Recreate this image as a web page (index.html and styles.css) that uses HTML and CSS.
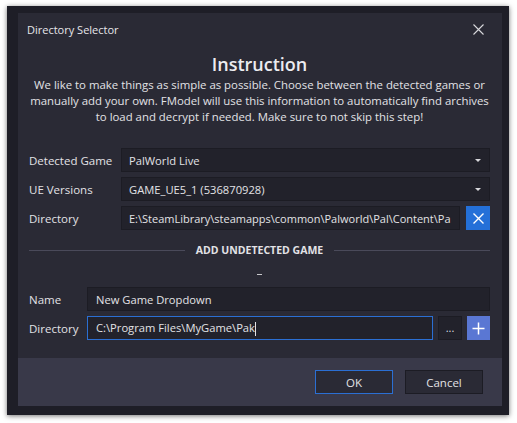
FILE: index.html
```html
<!DOCTYPE html>
<html>
<head>
<meta charset="utf-8">
<link rel="stylesheet" href="styles.css">
</head>
<body>
<div class="window">
  <div class="panel">
    <div class="titlebar">
      <span class="title">Directory Selector</span>
      <svg class="close" width="11" height="11" viewBox="0 0 11 11"><path d="M0.5 0.5L10.5 10.5M10.5 0.5L0.5 10.5" stroke="#d8d8dc" stroke-width="1.1"/></svg>
    </div>
    <div class="content">
      <h1 class="heading">Instruction</h1>
      <p class="intro">We like to make things as simple as possible. Choose between the detected games or<br>manually add your own. FModel will use this information to automatically find archives<br>to load and decrypt if needed. Make sure to not skip this step!</p>
      <div class="form">
        <div class="label">Detected Game</div>
        <div class="field select"><span class="val">PalWorld Live</span><span class="arrow"></span></div>
        <div class="label">UE Versions</div>
        <div class="field select"><span class="val">GAME_UE5_1 (536870928)</span><span class="arrow"></span></div>
        <div class="label">Directory</div>
        <div class="fieldrow">
          <div class="field"><span class="val path">E:\SteamLibrary\steamapps\common\Palworld\Pal\Content\Pa</span></div>
          <div class="btn btn-blue">
            <svg width="11" height="11" viewBox="0 0 11 11"><path d="M0.5 0.5L10.5 10.5M10.5 0.5L0.5 10.5" stroke="#ffffff" stroke-width="1.4"/></svg>
          </div>
        </div>
      </div>
      <div class="separator"><span class="line"></span><span class="septext">ADD UNDETECTED GAME</span><span class="line"></span></div>
      <div class="dash"></div>
      <div class="form form2">
        <div class="label">Name</div>
        <div class="field"><span class="val">New Game Dropdown</span></div>
        <div class="label">Directory</div>
        <div class="fieldrow">
          <div class="field focused"><span class="val">C:\Program Files\MyGame\Pak<span class="caret"></span></span></div>
          <div class="btn btn-dark">...</div>
          <div class="btn btn-plus">
            <svg width="13" height="13" viewBox="0 0 13 13"><path d="M6.5 0.5V12.5M0.5 6.5H12.5" stroke="#ffffff" stroke-width="1.5"/></svg>
          </div>
        </div>
      </div>
    </div>
    <div class="footer">
      <div class="fbtn fbtn-ok">OK</div>
      <div class="fbtn">Cancel</div>
    </div>
  </div>
</div>
</body>
</html>
```

FILE: styles.css
```css
* { box-sizing: border-box; }
html, body { margin: 0; padding: 0; background: #ffffff; }
body {
  font-family: "Open Sans", "Noto Sans", sans-serif;
  color: #e2e2e6;
  width: 517px;
  height: 423px;
  overflow: hidden;
}
.window {
  margin: 6px 0 0 7px;
  width: 502px;
  height: 409px;
  background: #1e1e27;
  padding: 7px 7px 9px 11px;
  box-shadow: 0 1px 5px rgba(0,0,0,0.55);
}
.panel {
  background: #2a2a35;
  height: 100%;
  display: flex;
  flex-direction: column;
}
.titlebar {
  height: 33px;
  flex: none;
  display: flex;
  align-items: center;
  justify-content: space-between;
  padding: 0 18px 0 9px;
}
.title { font-size: 11px; color: #e6e6ea; }
.close { display: block; }
.content {
  flex: 1;
  min-height: 0;
  padding: 0 12px 0 11px;
}
.heading {
  margin: 6px 0 0;
  font-size: 18px;
  line-height: 24px;
  font-weight: 600;
  text-align: center;
  color: #ececf0;
}
.intro {
  margin: 1px -10px 0;
  font-size: 11.4px;
  line-height: 16px;
  text-align: center;
  white-space: nowrap;
  color: #e2e2e6;
}
.form {
  margin-top: 23px;
  display: grid;
  grid-template-columns: 92px minmax(0, 1fr);
  row-gap: 5px;
  align-items: center;
}
.form2 {
  margin-top: 12px;
  grid-template-columns: 58px minmax(0, 1fr);
}
.label { font-size: 11.5px; color: #e2e2e6; white-space: nowrap; }
.field {
  height: 24px;
  background: #22222b;
  border: 1px solid #1c1c24;
  padding: 0 7px;
  display: flex;
  align-items: center;
  font-size: 11.2px;
  color: #e2e2e6;
  min-width: 0;
}
.field .val {
  flex: 1;
  overflow: hidden;
  white-space: nowrap;
}
.field .path { font-size: 11px; }
.select .arrow {
  width: 0;
  height: 0;
  border-left: 3px solid transparent;
  border-right: 3px solid transparent;
  border-top: 3px solid #d8d8dc;
  margin-right: 1px;
}
.fieldrow {
  display: flex;
  gap: 5px;
  min-width: 0;
}
.fieldrow .field { flex: 1; }
.btn {
  flex: none;
  width: 24px;
  height: 24px;
  display: flex;
  align-items: center;
  justify-content: center;
}
.btn-blue { background: #2470d8; width: 24px; margin-left: 1px; }
.btn-dark {
  background: #22222b;
  border: 1px solid #1c1c24;
  color: #dcdce0;
  font-size: 11px;
  line-height: 1;
  padding-bottom: 2px;
}
.btn-plus { background: #5a77d3; width: 23px; }
.focused { border-color: #2b6fd3; }
.caret {
  display: inline-block;
  width: 1px;
  height: 14px;
  background: #e2e2e6;
  vertical-align: middle;
}
.form2 .field { padding-left: 8px; }
.separator {
  margin-top: 13px;
  height: 14px;
  display: flex;
  align-items: center;
  gap: 11px;
}
.separator .line { height: 1px; background: #4a4a5a; flex: 1; }
.septext {
  flex: none;
  font-size: 10.5px;
  font-weight: 700;
  color: #e2e2e6;
  white-space: nowrap;
}
.dash {
  width: 5px;
  height: 1px;
  background: #c8c8cc;
  margin: 17px auto 0;
}
.footer {
  height: 48px;
  flex: none;
  background: #393949;
  display: flex;
  justify-content: flex-end;
  gap: 12px;
  padding: 12px 19px 0 0;
}
.fbtn {
  width: 78px;
  height: 24px;
  background: #2a2a35;
  border: 1px solid #1c1c24;
  display: flex;
  align-items: center;
  justify-content: center;
  font-size: 11.5px;
  color: #e2e2e6;
}
.fbtn-ok { border-color: #2b6fd3; }
```
